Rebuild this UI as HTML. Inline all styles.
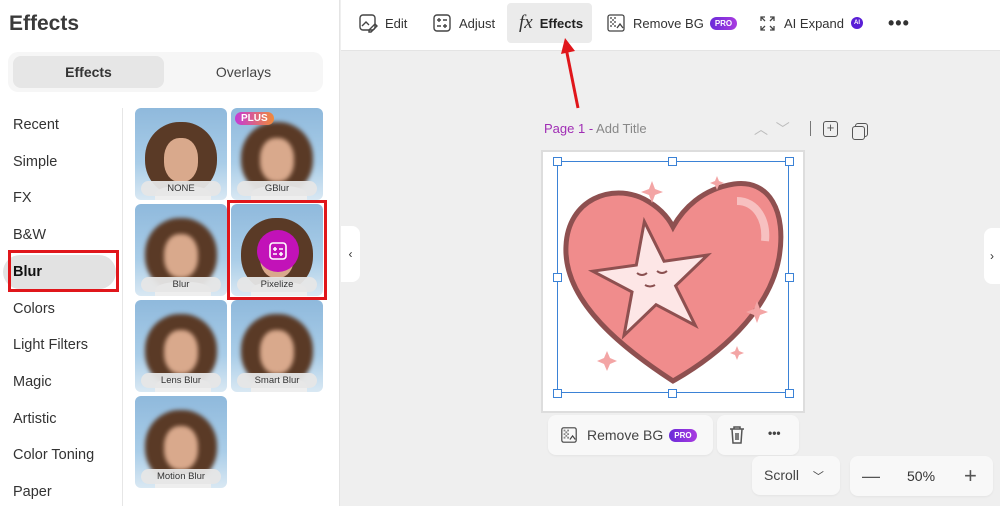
<!DOCTYPE html>
<html><head><style>
*{margin:0;padding:0;box-sizing:border-box}
body{width:1000px;height:506px;overflow:hidden;font-family:"Liberation Sans",sans-serif;background:#efefef;position:relative;color:#333}
.abs{position:absolute}
.left{left:0;top:0;width:340px;height:506px;background:#fff;border-right:1px solid #e4e4e4}
.cat{position:absolute;left:13px;font-size:14.5px;color:#333}
.th{position:absolute;width:92px;height:92px;border-radius:6px;overflow:hidden;background:linear-gradient(180deg,#8fb9dc,#a9cde8 60%,#d9e8f3)}
.th .hair{position:absolute;left:10px;top:14px;width:72px;height:74px;border-radius:48%;background:#5a3a26}
.th .face{position:absolute;left:29px;top:30px;width:34px;height:44px;border-radius:45%;background:#d9a98c}
.th .body{position:absolute;left:20px;top:78px;width:56px;height:20px;border-radius:40% 40% 0 0;background:#eee}
.th .lab{position:absolute;left:6px;right:6px;bottom:4px;height:15px;border-radius:8px;background:rgba(230,230,230,.95);font-size:9.5px;text-align:center;line-height:15px;color:#333}
.blur .hair,.blur .face{filter:blur(2px)}
.tb{position:absolute;top:0;height:46px;display:flex;align-items:center;font-size:13px;color:#333}
.pill{display:inline-block;background:linear-gradient(90deg,#6a2bd9,#a93be0);color:#fff;font-size:8px;font-weight:bold;border-radius:8px;padding:2px 5px;margin-left:6px}
.card{position:absolute;background:#f8f8f8;border-radius:8px;box-shadow:0 1px 2px rgba(0,0,0,.05)}
.h{position:absolute;width:9px;height:9px;border:1.5px solid #3b82d6;background:#fff}
</style></head><body>
<div class="abs left">
 <div class="abs" style="left:9px;top:12px;font-size:21px;font-weight:bold;color:#3a3a3a">Effects</div>
 <div class="abs" style="left:8px;top:52px;width:315px;height:40px;background:#f6f6f6;border-radius:10px"></div>
 <div class="abs" style="left:13px;top:56px;width:151px;height:32px;background:#e6e6e6;border-radius:8px;text-align:center;line-height:32px;font-size:14px;font-weight:bold">Effects</div>
 <div class="abs" style="left:166px;top:56px;width:155px;height:32px;text-align:center;line-height:32px;font-size:14px;color:#444">Overlays</div>
 <div class="abs" style="left:122px;top:108px;width:1px;height:398px;background:#e6e6e6"></div>
 <div class="cat" style="top:117px">Recent</div>
 <div class="cat" style="top:154px">Simple</div>
 <div class="cat" style="top:190px">FX</div>
 <div class="cat" style="top:227px">B&amp;W</div>
 <div class="abs" style="left:3px;top:255px;width:113px;height:34px;background:#e2e2e2;border-radius:17px"></div>
 <div class="abs" style="left:8px;top:250px;width:111px;height:42px;border:3px solid #e0161b"></div>
 <div class="cat" style="top:264px;font-weight:bold;color:#111">Blur</div>
 <div class="cat" style="top:301px">Colors</div>
 <div class="cat" style="top:337px">Light Filters</div>
 <div class="cat" style="top:374px">Magic</div>
 <div class="cat" style="top:411px">Artistic</div>
 <div class="cat" style="top:447px">Color Toning</div>
 <div class="cat" style="top:484px">Paper</div>

 <div class="th" style="left:135px;top:108px"><div class="hair"></div><div class="face"></div><div class="body"></div><div class="lab">NONE</div></div>
 <div class="th blur" style="left:231px;top:108px"><div class="hair"></div><div class="face"></div><div class="body"></div><div class="lab">GBlur</div><div class="abs" style="left:4px;top:4px;padding:1px 6px;border-radius:8px;background:linear-gradient(90deg,#c43bd6,#f08a3a);color:#fff;font-size:10px;font-weight:bold">PLUS</div></div>
 <div class="th blur" style="left:135px;top:204px"><div class="hair"></div><div class="face"></div><div class="body"></div><div class="lab">Blur</div></div>
 <div class="th" style="left:231px;top:204px"><div class="hair"></div><div class="face"></div><div class="body"></div><div class="lab">Pixelize</div>
  <div class="abs" style="left:26px;top:26px;width:42px;height:42px;border-radius:50%;background:#c212b8"></div>
  <svg class="abs" style="left:37px;top:37px" width="20" height="20" viewBox="0 0 20 20" fill="none" stroke="#fff" stroke-width="1.6"><rect x="2" y="2" width="16" height="16" rx="3"/><path d="M5 8h4M7 6v4M11 8h4M5 13h4M11 13h4M13 11v4"/></svg></div>
 <div class="abs" style="left:227px;top:200px;width:100px;height:100px;border:3px solid #e0161b"></div>
 <div class="th blur" style="left:135px;top:300px"><div class="hair"></div><div class="face"></div><div class="body"></div><div class="lab">Lens Blur</div></div>
 <div class="th blur" style="left:231px;top:300px"><div class="hair"></div><div class="face"></div><div class="body"></div><div class="lab">Smart Blur</div></div>
 <div class="th blur" style="left:135px;top:396px"><div class="hair"></div><div class="face"></div><div class="body"></div><div class="lab">Motion Blur</div></div>
</div>
<div class="abs" style="left:341px;top:0;width:659px;height:51px;background:#fff;border-bottom:1px solid #e4e4e4"></div>
<div class="tb" style="left:358px"><svg width="20" height="20" viewBox="0 0 20 20" fill="none" stroke="#444" stroke-width="1.4"><rect x="2" y="2" width="15" height="15" rx="3"/><path d="M4 13l4-4 3 3"/><path d="M11 17l6-6 2 2-6 6h-2z"/></svg><span style="margin-left:7px">Edit</span></div>
<div class="tb" style="left:432px"><svg width="20" height="20" viewBox="0 0 20 20" fill="none" stroke="#444" stroke-width="1.4"><rect x="2" y="2" width="16" height="16" rx="3"/><path d="M5 7h4M7 5v4M11 7h4M5 13h4M11 13h4M13 11v4"/></svg><span style="margin-left:7px">Adjust</span></div>
<div class="abs" style="left:507px;top:3px;width:85px;height:40px;background:#ebebeb;border-radius:4px"></div>
<div class="tb" style="left:519px"><span style="font-family:'Liberation Serif',serif;font-style:italic;font-size:19px">fx</span><span style="margin-left:7px;font-weight:bold;color:#222">Effects</span></div>
<div class="tb" style="left:606px"><svg width="20" height="20" viewBox="0 0 20 20" fill="none" stroke="#444" stroke-width="1.3"><rect x="2" y="2" width="16" height="16" rx="2"/><path d="M4 4h2v2H4zM8 4h2v2H8zM6 6h2v2H6zM4 8h2v2H4zM8 8h2v2H8zM6 10h2v2H6zM4 12h2v2H4zM8 12h2v2H8z" fill="#888" stroke="none"/><path d="M11 15l3-4 3 4"/></svg><span style="margin-left:7px">Remove BG</span><span class="pill">PRO</span></div>
<div class="tb" style="left:759px"><svg width="17" height="17" viewBox="0 0 17 17" fill="none" stroke="#444" stroke-width="1.3"><path d="M2 6V2h4M2 2l4 4M15 6V2h-4M15 2l-4 4M2 11v4h4M2 15l4-4M15 11v4h-4M15 15l-4-4"/></svg><span style="margin-left:8px">AI Expand</span><span style="display:inline-block;width:12px;height:12px;border-radius:50%;background:#5a1fd6;color:#fff;font-size:6px;text-align:center;line-height:12px;margin-left:7px;font-weight:bold">AI</span></div>
<div class="tb" style="left:888px;font-size:18px;font-weight:bold;letter-spacing:1px">•••</div>
<svg class="abs" style="left:560px;top:38px" width="24" height="72" viewBox="0 0 24 72"><path d="M18 70L6 10" stroke="#e0161b" stroke-width="3"/><path d="M1 16L5 0l10 13z" fill="#e0161b"/></svg>
<div class="abs" style="left:341px;top:226px;width:19px;height:56px;background:#fff;border-radius:0 8px 8px 0;font-size:12px;line-height:56px;text-align:center">‹</div>
<div class="abs" style="left:984px;top:228px;width:16px;height:56px;background:#fff;border-radius:8px 0 0 8px;font-size:12px;line-height:56px;text-align:center">›</div>
<div class="abs" style="left:544px;top:121px;font-size:13px;color:#a02db5">Page 1 - <span style="color:#888">Add Title</span></div>
<div class="abs" style="left:754px;top:119px;font-size:14px;color:#bbb">︿ &nbsp;﹀</div>
<div class="abs" style="left:810px;top:121px;width:1px;height:15px;background:#777"></div>
<div class="abs" style="left:823px;top:121px;width:15px;height:16px;border:1.4px solid #555;border-radius:3px;font-size:13px;line-height:12px;text-align:center;color:#555">+</div>
<div class="abs" style="left:855px;top:123px;width:13px;height:14px;border:1.4px solid #555;border-radius:3px"></div>
<div class="abs" style="left:852px;top:126px;width:13px;height:14px;border:1.4px solid #555;border-radius:3px;background:#efefef"></div>
<div class="abs" style="left:541px;top:150px;width:264px;height:263px;background:#fff;border:2px solid #ddd"></div>
<svg class="abs" style="left:557px;top:161px" width="232" height="232" viewBox="0 0 232 232">
 <path d="M116 220C70 190 6 142 9 85 11 38 55 22 87 38 102 46 111 56 116 66 126 48 145 28 177 23 212 18 230 50 222 97 212 152 160 195 116 220z" fill="#f08c8c" stroke="#8e5050" stroke-width="5"/>
 <path d="M180 40c20 0 30 20 28 40" stroke="#f7c0c0" stroke-width="8" fill="none"/>
 <path d="M95 60l14 42 44 0-36 26 14 42-36-26-36 26 14-42-36-26 44 0z" fill="#fde6e6" stroke="#8e5050" stroke-width="3" transform="rotate(-8 95 115)"/>
 <path d="M80 112q5 4 10 0M100 110q5 4 10 0M88 124q5 3 10 0" stroke="#8a5050" stroke-width="2" fill="none"/>
 <g fill="#f3a5a5"><path d="M95 20l3 8 8 3-8 3-3 8-3-8-8-3 8-3z"/><path d="M200 140l3 8 8 3-8 3-3 8-3-8-8-3 8-3z"/><path d="M50 190l3 7 7 3-7 3-3 7-3-7-7-3 7-3z"/><path d="M180 185l2 5 5 2-5 2-2 5-2-5-5-2 5-2z"/><path d="M160 15l2 5 5 2-5 2-2 5-2-5-5-2 5-2z"/></g>
</svg>
<div class="abs" style="left:557px;top:161px;width:232px;height:232px;border:1.5px solid #3b82d6"></div>
<div class="h" style="left:553px;top:157px"></div><div class="h" style="left:668px;top:157px"></div><div class="h" style="left:785px;top:157px"></div>
<div class="h" style="left:553px;top:273px"></div><div class="h" style="left:785px;top:273px"></div>
<div class="h" style="left:553px;top:389px"></div><div class="h" style="left:668px;top:389px"></div><div class="h" style="left:785px;top:389px"></div>
<div class="card" style="left:548px;top:415px;width:165px;height:40px;display:flex;align-items:center;padding-left:12px;font-size:14px;color:#444"><svg width="18" height="18" viewBox="0 0 20 20" fill="none" stroke="#444" stroke-width="1.3"><rect x="2" y="2" width="16" height="16" rx="2"/><path d="M4 4h2v2H4zM8 4h2v2H8zM6 6h2v2H6zM4 8h2v2H4zM8 8h2v2H8zM6 10h2v2H6zM4 12h2v2H4zM8 12h2v2H8z" fill="#888" stroke="none"/><path d="M11 15l3-4 3 4"/></svg><span style="margin-left:9px">Remove BG</span><span class="pill">PRO</span></div>
<div class="card" style="left:717px;top:415px;width:82px;height:40px"><svg class="abs" style="left:11px;top:10px" width="18" height="20" viewBox="0 0 18 20" fill="none" stroke="#555" stroke-width="1.5"><path d="M2 4h14M6 4V2h6v2M4 4l1 14h8l1-14M8 8v7M10 8v7"/></svg><div class="abs" style="left:51px;top:11px;font-size:12px;font-weight:bold;color:#444">•••</div></div>
<div class="card" style="left:752px;top:456px;width:88px;height:39px;font-size:14px;color:#444;line-height:39px;padding-left:12px">Scroll <span style="margin-left:10px;font-size:11px">﹀</span></div>
<div class="card" style="left:850px;top:456px;width:143px;height:40px;font-size:14px;color:#333;line-height:40px"><span class="abs" style="left:12px;font-size:18px;color:#555">—</span><span class="abs" style="left:57px">50%</span><span class="abs" style="left:114px;font-size:22px;color:#555">+</span></div>
</body></html>
